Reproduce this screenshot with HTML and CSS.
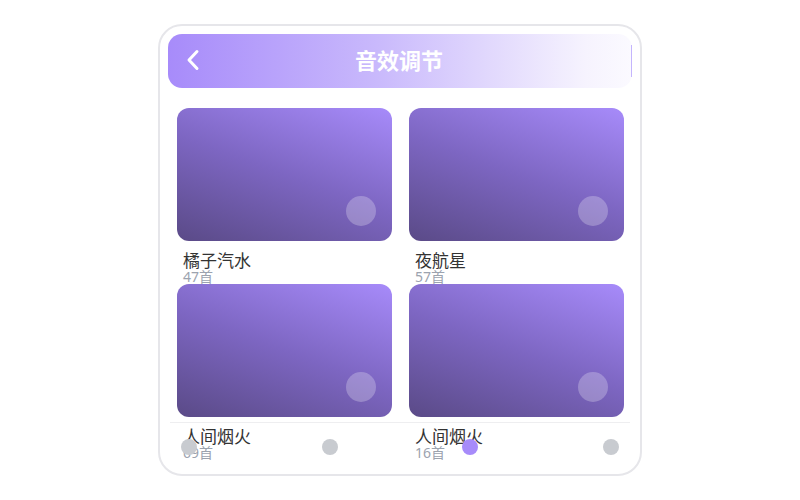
FILE: index.html
```html
<!DOCTYPE html>
<html>
<head>
	<meta charset="utf-8">
	<meta name="viewport" content="width=device-width, initial-scale=1">
	<title>音效调节</title>
	<link rel="stylesheet" href="styles.css">
</head>
<body>
	<div class="phone">
		<div class="header">
			<div class="back">
				<svg width="14" height="22" viewBox="0 0 14 22">
					<polyline points="11,2.5 3,11 11,19.5" fill="none" stroke="#fff" stroke-width="3" stroke-linecap="round" stroke-linejoin="round"/>
				</svg>
			</div>
			<div class="title">音效调节</div>
			<div class="side"></div>
		</div>

		<div class="grid">
			<div class="item">
				<div class="cover"><span class="play"></span></div>
				<div class="name">橘子汽水</div>
				<div class="count">47首</div>
			</div>
			<div class="item">
				<div class="cover"><span class="play"></span></div>
				<div class="name">夜航星</div>
				<div class="count">57首</div>
			</div>
			<div class="item">
				<div class="cover"><span class="play"></span></div>
				<div class="name">人间烟火</div>
				<div class="count">69首</div>
			</div>
			<div class="item">
				<div class="cover"><span class="play"></span></div>
				<div class="name">人间烟火</div>
				<div class="count">16首</div>
			</div>
		</div>

		<div class="tabbar">
			<span class="dot"></span>
			<span class="dot"></span>
			<span class="dot active"></span>
			<span class="dot"></span>
		</div>
	</div>
</body>
</html>
```

FILE: styles.css
```css
body
{
	margin: 0;
	height: 500px;
	display: flex;
	align-items: center;
	justify-content: center;
	background: #fff;
	font-family: "Noto Sans", "Noto Sans CJK SC", sans-serif;
}
.phone
{
	position: relative;
	width: 484px;
	height: 452px;
	box-sizing: border-box;
	border: 2px solid #e6e6ea;
	border-radius: 24px;
	padding: 8px;
	overflow: hidden;
}
.header
{
	height: 54px;
	border-radius: 14px;
	background: linear-gradient(90deg, #a78bfa 0%, #c9b9fc 45%, #f6f3fe 90%, #fbfaff 100%);
	display: flex;
	align-items: center;
}
.back
{
	width: 50px;
	display: flex;
	justify-content: center;
	margin-top: -2px;
}
.title
{
	flex: 1;
	text-align: center;
	color: #fff;
	font-size: 22px;
	font-weight: bold;
	margin-top: -4px;
}
.side
{
	width: 52px;
	height: 32px;
	box-sizing: border-box;
	border-right: 1px solid #c4b5fd;
}
.grid
{
	display: grid;
	grid-template-columns: 215px 215px;
	column-gap: 17px;
	grid-auto-rows: 168px;
	row-gap: 8px;
	padding: 20px 0 0 9px;
}
.item
{
	min-height: 0;
}
.cover
{
	position: relative;
	height: 133px;
	border-radius: 12px;
	background: linear-gradient(200deg, #a78bfa 0%, #7d66c2 50%, #5a4a87 100%);
}
.play
{
	position: absolute;
	right: 16px;
	bottom: 15px;
	width: 30px;
	height: 30px;
	border-radius: 50%;
	background: rgba(255, 255, 255, 0.25);
}
.name
{
	margin-top: 11px;
	padding-left: 6px;
	font-size: 17px;
	line-height: 17px;
	color: #333;
}
.count
{
	padding-left: 6px;
	font-size: 14px;
	line-height: 15px;
	color: #9ca3af;
}
.tabbar
{
	position: absolute;
	left: 10px;
	right: 10px;
	top: 396px;
	height: 48px;
	border-top: 1px solid #eeeef0;
	display: flex;
	justify-content: space-between;
	align-items: center;
	padding: 0 11px;
}
.dot
{
	width: 16px;
	height: 16px;
	border-radius: 50%;
	background: #c8cbd0;
}
.dot.active
{
	background: #a78bfa;
}
```
